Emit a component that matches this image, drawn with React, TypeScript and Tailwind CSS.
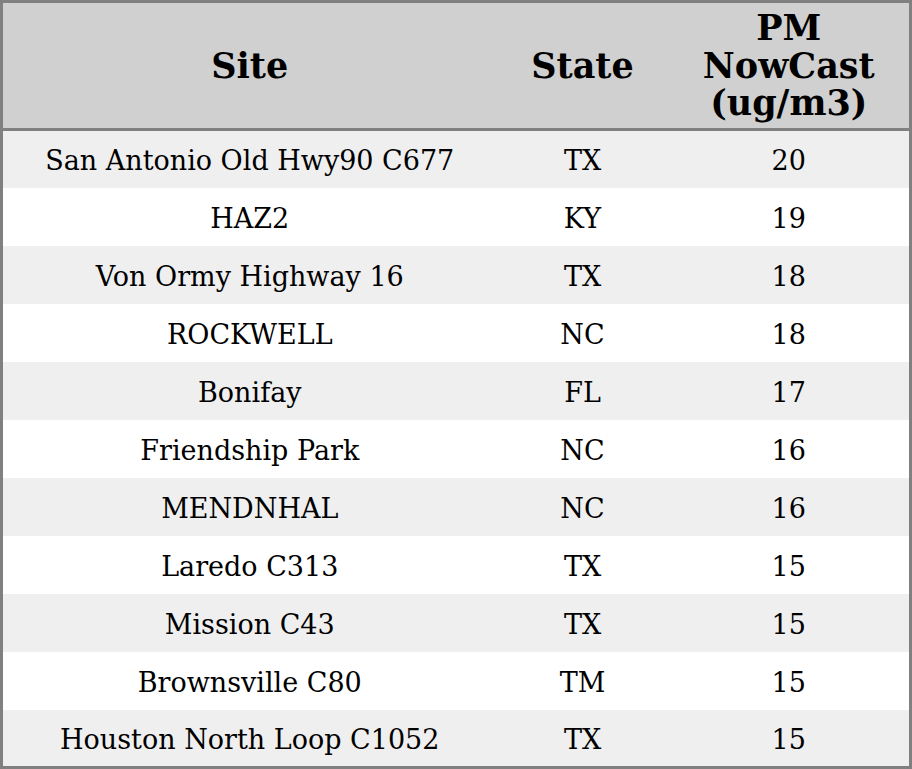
import React from 'react';

const rows: [string, string, number][] = [
  ['San Antonio Old Hwy90 C677', 'TX', 20],
  ['HAZ2', 'KY', 19],
  ['Von Ormy Highway 16', 'TX', 18],
  ['ROCKWELL', 'NC', 18],
  ['Bonifay', 'FL', 17],
  ['Friendship Park', 'NC', 16],
  ['MENDNHAL', 'NC', 16],
  ['Laredo C313', 'TX', 15],
  ['Mission C43', 'TX', 15],
  ['Brownsville C80', 'TM', 15],
  ['Houston North Loop C1052', 'TX', 15],
];

const App: React.FC = () => {
  return (
    <div className="w-[912px] h-[769px] bg-white font-['DejaVu_Serif',serif] text-black">
      <table className="w-full h-full border-[3px] border-[#808080] border-collapse table-fixed">
        <colgroup>
          <col className="w-[495px]" />
          <col className="w-[172px]" />
          <col />
        </colgroup>
        <thead>
          <tr className="h-[128px] bg-[#d0d0d0] border-b-[3px] border-[#808080]">
            <th className="text-[35px] font-bold leading-[37.5px]">Site</th>
            <th className="text-[35px] font-bold leading-[37.5px]">State</th>
            <th className="text-[35px] font-bold leading-[37.5px]">
              PM
              <br />
              NowCast
              <br />
              (ug/m3)
            </th>
          </tr>
        </thead>
        <tbody>
          {rows.map(([site, state, value], i) => (
            <tr key={site} className={`h-[58px] ${i % 2 === 0 ? 'bg-[#efefef]' : 'bg-white'}`}>
              <td className="text-center text-[27px] leading-[32px] pt-[4px]">{site}</td>
              <td className="text-center text-[27px] leading-[32px] pt-[4px]">{state}</td>
              <td className="text-center text-[27px] leading-[32px] pt-[4px]">{value}</td>
            </tr>
          ))}
        </tbody>
      </table>
    </div>
  );
};

export default App;
